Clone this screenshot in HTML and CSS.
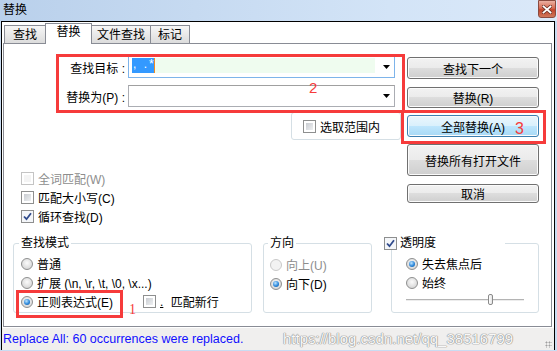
FILE: index.html
```html
<!DOCTYPE html>
<html lang="zh-CN">
<head>
    <meta charset="UTF-8">
    <title>替换</title>
    <link rel="stylesheet" href="styles.css">
</head>
<body>
    <div class="window">
        <div class="titlebar">
            <span class="title">替换</span>
            <span class="close">
                <svg width="10" height="9" viewBox="0 0 10 9">
                    <path d="M1.5 1.5 L8.5 7.5 M8.5 1.5 L1.5 7.5" stroke="#6b3328" stroke-width="3.4" stroke-linecap="square"/>
                    <path d="M1.5 1.5 L8.5 7.5 M8.5 1.5 L1.5 7.5" stroke="#fff" stroke-width="1.8" stroke-linecap="square"/>
                </svg>
            </span>
        </div>

        <div class="client">
            <div class="tabs">
                <div class="tab t1">查找</div>
                <div class="tab t2 active">替换</div>
                <div class="tab t3">文件查找</div>
                <div class="tab t4">标记</div>
            </div>

            <div class="panel">
                <div class="main">
                    <div class="left">
                        <div class="fields">
                            <label>查找目标 :</label>
                            <div class="combo focus">
                                <span class="sel">, .*</span><span class="hl"></span>
                                <svg class="arrow" width="7" height="4" viewBox="0 0 7 4"><polygon points="0,0 7,0 3.5,4" fill="#000"/></svg>
                            </div>
                            <label>替换为(P) :</label>
                            <div class="combo">
                                <svg class="arrow" width="7" height="4" viewBox="0 0 7 4"><polygon points="0,0 7,0 3.5,4" fill="#000"/></svg>
                            </div>
                        </div>

                        <div class="scope">
                            <span class="check"></span>选取范围内
                        </div>

                        <div class="checks">
                            <div class="opt disabled"><span class="check"></span>全词匹配(W)</div>
                            <div class="opt"><span class="check"></span>匹配大小写(C)</div>
                            <div class="opt"><span class="check on"><svg width="9" height="9" viewBox="0 0 9 9"><path d="M1 4.5 L3.5 7.2 L8 1.2" stroke="#2f4a8c" stroke-width="1.8" fill="none"/></svg></span>循环查找(D)</div>
                        </div>
                    </div>

                    <div class="buttons">
                        <button class="btn b1">查找下一个</button>
                        <button class="btn b2">替换(R)</button>
                        <button class="btn b3 hot">全部替换(A)</button>
                        <button class="btn b4">替换所有打开文件</button>
                        <button class="btn b5">取消</button>
                    </div>
                </div>

                <div class="groups">
                    <fieldset class="group mode">
                        <legend>查找模式</legend>
                        <div class="opt"><span class="radio"></span>普通</div>
                        <div class="opt"><span class="radio"></span>扩展 (\n, \r, \t, \0, \x...)</div>
                        <div class="opt-row">
                            <div class="opt regex"><span class="radio on"></span>正则表达式(E)</div>
                            <div class="opt"><span class="check"></span><u>.</u>&nbsp;匹配新行</div>
                        </div>
                    </fieldset>

                    <fieldset class="group dir">
                        <legend>方向</legend>
                        <div class="opt disabled"><span class="radio"></span>向上(U)</div>
                        <div class="opt"><span class="radio on"></span>向下(D)</div>
                    </fieldset>

                    <fieldset class="group alpha">
                        <legend><span class="check on"><svg width="9" height="9" viewBox="0 0 9 9"><path d="M1 4.5 L3.5 7.2 L8 1.2" stroke="#2f4a8c" stroke-width="1.8" fill="none"/></svg></span>透明度</legend>
                        <div class="opt"><span class="radio on"></span>失去焦点后</div>
                        <div class="opt"><span class="radio"></span>始终</div>
                        <div class="slider"><span class="thumb"></span></div>
                    </fieldset>
                </div>
            </div>

            <div class="status">
                Replace All: 60 occurrences were replaced.
                <span class="watermark">https://blog.csdn.net/qq_38516799</span>
                <span class="grip"></span>
            </div>
        </div>

        <div class="mark box2"></div>
        <div class="mark box3"></div>
        <div class="mark box1"></div>
        <span class="num n2">2</span>
        <span class="num n3">3</span>
        <span class="num n1">1</span>
    </div>
</body>
</html>
```

FILE: styles.css
```css
body{
    margin: 0;
    width: 557px;
    height: 351px;
    overflow: hidden;
    background: #c9dcf2;
    font-family: "Liberation Sans", "Noto Sans CJK SC", sans-serif;
    font-size: 12px;
    color: #000;
}

.window{
    position: relative;
    width: 557px;
    height: 351px;
}

/* title bar */
.titlebar{
    height: 21px;
    box-sizing: border-box;
    display: flex;
    justify-content: space-between;
    padding-left: 3px;
    background: linear-gradient(90deg, #b9d0eb, #d3e4f7 70%, #dbe9f9);
}
.title{
    line-height: 20px;
}
.close{
    width: 18px;
    height: 18px;
    box-sizing: border-box;
    margin-right: 1px;
    border: 1px solid #8a4a3f;
    border-radius: 0 0 3px 3px;
    background: linear-gradient(#eab0a2, #d86a52 45%, #c2432a 55%, #d0785c);
    display: flex;
    align-items: center;
    justify-content: center;
}

/* client area */
.client{
    margin-left: 1px;
    width: 554px;
    height: 329px;
    box-sizing: border-box;
    border: 1px solid #000;
    background: #fff;
}

.tabs{
    display: flex;
    align-items: flex-end;
    height: 21px;
    padding-left: 2px;
}
.tab{
    height: 18px;
    box-sizing: border-box;
    margin-right: -1px;
    border: 1px solid #898c95;
    border-bottom: none;
    background: linear-gradient(#f6f6f6, #e9e9e9 50%, #dcdcdc);
    text-align: center;
    line-height: 18px;
}
.tab.active{
    height: 21px;
    margin-bottom: -1px;
    background: #fff;
    position: relative;
    z-index: 1;
    line-height: 17px;
}
.t1{ width: 42px; }
.t2{ width: 47px; }
.t3{ width: 60px; }
.t4{ width: 40px; }

.panel{
    margin: 0 2px 0 1px;
    height: 284px;
    box-sizing: border-box;
    border: 1px solid #898c95;
}

.main{
    display: flex;
    height: 182px;
}
.left{
    width: 397px;
}

.fields{
    display: grid;
    grid-template-columns: 121px 267px;
    grid-auto-rows: 22px;
    column-gap: 3px;
    row-gap: 7px;
    margin-top: 12px;
    align-items: center;
}
.fields label{
    text-align: right;
}

.combo{
    height: 22px;
    box-sizing: border-box;
    border: 1px solid #abadb3;
    border-top-color: #a0a0a0;
    display: flex;
    align-items: center;
}
.combo.focus{
    border-color: #7eb4ea;
    align-items: flex-start;
}
.combo .arrow{
    margin-left: auto;
    margin-right: 4px;
    align-self: center;
}
.sel{
    margin: 1px 0 0 3px;
    width: 22px;
    height: 15px;
    padding-left: 1px;
    box-sizing: border-box;
    background: #3399ff;
    color: #fff;
    line-height: 13px;
    letter-spacing: 2px;
    white-space: pre;
}
.hl{
    margin-top: 1px;
    width: 221px;
    height: 15px;
    box-sizing: border-box;
    border-left: 1px solid #f08a24;
    background: #effcef;
}

.scope{
    margin: 5px 0 0 287px;
    width: 110px;
    height: 28px;
    box-sizing: border-box;
    border: 1px solid #d5dfe5;
    border-radius: 3px;
    display: flex;
    align-items: center;
    gap: 4px;
    padding-left: 11px;
}

.checks{
    margin-top: 29px;
    padding-left: 17px;
}

.opt{
    height: 19px;
    display: flex;
    align-items: center;
    gap: 4px;
    white-space: nowrap;
}
.opt.disabled{
    color: #8d8d8d;
}

/* checkbox and radio */
.check{
    position: relative;
    flex: none;
    width: 13px;
    height: 13px;
    box-sizing: border-box;
    border: 1px solid #8e8f8f;
    background: #fff;
    display: flex;
    align-items: center;
    justify-content: center;
}
.check::before{
    content: "";
    position: absolute;
    top: 2px;
    left: 2px;
    width: 7px;
    height: 7px;
    background: linear-gradient(135deg, #c9ccd1, #eef0f2);
}
.check.on{
    background: #f4f6f9;
}
.check.on::before{
    display: none;
}
.disabled .check{
    border-color: #c4c4c4;
}
.disabled .check::before{
    background: #f4f4f4;
}

.radio{
    position: relative;
    flex: none;
    width: 12px;
    height: 12px;
    box-sizing: border-box;
    border: 1px solid #8e8f8f;
    border-radius: 50%;
    background: radial-gradient(circle at 50% 40%, #fbfbfb, #dadada 70%, #cfcfcf);
}
.radio.on::after{
    content: "";
    position: absolute;
    top: 2px;
    left: 2px;
    width: 6px;
    height: 6px;
    border-radius: 50%;
    background: radial-gradient(circle at 40% 35%, #bfe6ff, #2c88dc 55%, #10508f);
}
.disabled .radio{
    border-color: #c9c9c9;
    background: #f2f2f2;
}

/* buttons */
.buttons{
    margin-left: 6px;
    width: 132px;
    padding-top: 13px;
    display: flex;
    flex-direction: column;
}
.btn{
    width: 132px;
    padding: 0;
    border: 1px solid #707070;
    border-radius: 3px;
    background: linear-gradient(#f2f2f2, #ebebeb 50%, #dddddd 50%, #cfcfcf);
    box-shadow: inset 0 0 0 1px #fbfbfb;
    font-family: inherit;
    font-size: 12px;
    color: #000;
}
.btn.hot{
    border-color: #3c7fb1;
    background: linear-gradient(#eaf6fd, #d9f0fc 50%, #bee6fd 50%, #a7d9f5);
}
.b1{ height: 22px; }
.b2{ height: 21px; margin-top: 8px; }
.b3{ height: 22px; margin-top: 7px; }
.b4{ height: 32px; margin-top: 7px; }
.b5{ height: 19px; margin-top: 8px; }

/* group boxes */
.groups{
    display: flex;
    align-items: flex-start;
    margin-top: 10px;
    padding-left: 9px;
}
.group{
    margin: 0;
    min-width: 0;
    height: 77px;
    box-sizing: border-box;
    border: 1px solid #d5dfe5;
    border-radius: 3px;
    padding: 4px 0 0 7px;
}
.group legend{
    padding: 0 2px;
    margin-left: -2px;
    line-height: 14px;
}
.mode{
    width: 239px;
}
.opt-row{
    display: flex;
}
.regex{
    width: 122px;
}
.dir{
    width: 109px;
    margin-left: 11px;
    padding-left: 6px;
    padding-top: 5px;
}
.alpha{
    width: 148px;
    margin-left: 19px;
    padding-left: 14px;
}
.alpha legend{
    width: 121px;
    margin-left: -22px;
    padding: 0;
    background: #fff;
    display: flex;
    align-items: center;
    gap: 3px;
}

.slider{
    position: relative;
    width: 118px;
    height: 12px;
    margin-top: 2px;
}
.slider::before{
    content: "";
    position: absolute;
    left: 0;
    right: 0;
    top: 5px;
    height: 1px;
    background: #b4b4b4;
    border-bottom: 1px solid #ececec;
}
.thumb{
    position: absolute;
    left: 82px;
    top: 0;
    width: 5px;
    height: 11px;
    box-sizing: border-box;
    border: 1px solid #8a8a8a;
    border-radius: 2px;
    background: linear-gradient(90deg, #fff, #e4e4e4);
}

/* status bar */
.status{
    position: relative;
    height: 22px;
    margin-top: 1px;
    padding-left: 1px;
    background: #f0efee;
    color: #1010ff;
    font-size: 12.5px;
    line-height: 22px;
    white-space: nowrap;
}
.watermark{
    position: absolute;
    left: 281px;
    top: 0;
    font-size: 15px;
    color: #f8f8f8;
    text-shadow: 0 0 1px #8c8c8c, 0 0 1px #8c8c8c, 0 0 1px #8c8c8c;
}
.grip{
    position: absolute;
    right: 2px;
    bottom: 2px;
    width: 7px;
    height: 7px;
    background: radial-gradient(circle, #a0a0a0 0.8px, transparent 1.2px) 0 0 / 3px 3px;
}

/* red annotations */
.mark{
    position: absolute;
    border: 3px solid #f63b3b;
}
.box2{ left: 56px; top: 54px; width: 343px; height: 53px; }
.box3{ left: 401px; top: 110px; width: 139px; height: 28px; }
.box1{ left: 16px; top: 290px; width: 101px; height: 22px; }

.num{
    position: absolute;
    color: #f63b3b;
    line-height: 1;
}
.n2{ left: 309px; top: 80px; font-size: 15px; }
.n3{ left: 515px; top: 121px; font-size: 16px; }
.n1{ left: 129px; top: 303px; font-size: 14px; font-family: "Liberation Serif", serif; }
```
